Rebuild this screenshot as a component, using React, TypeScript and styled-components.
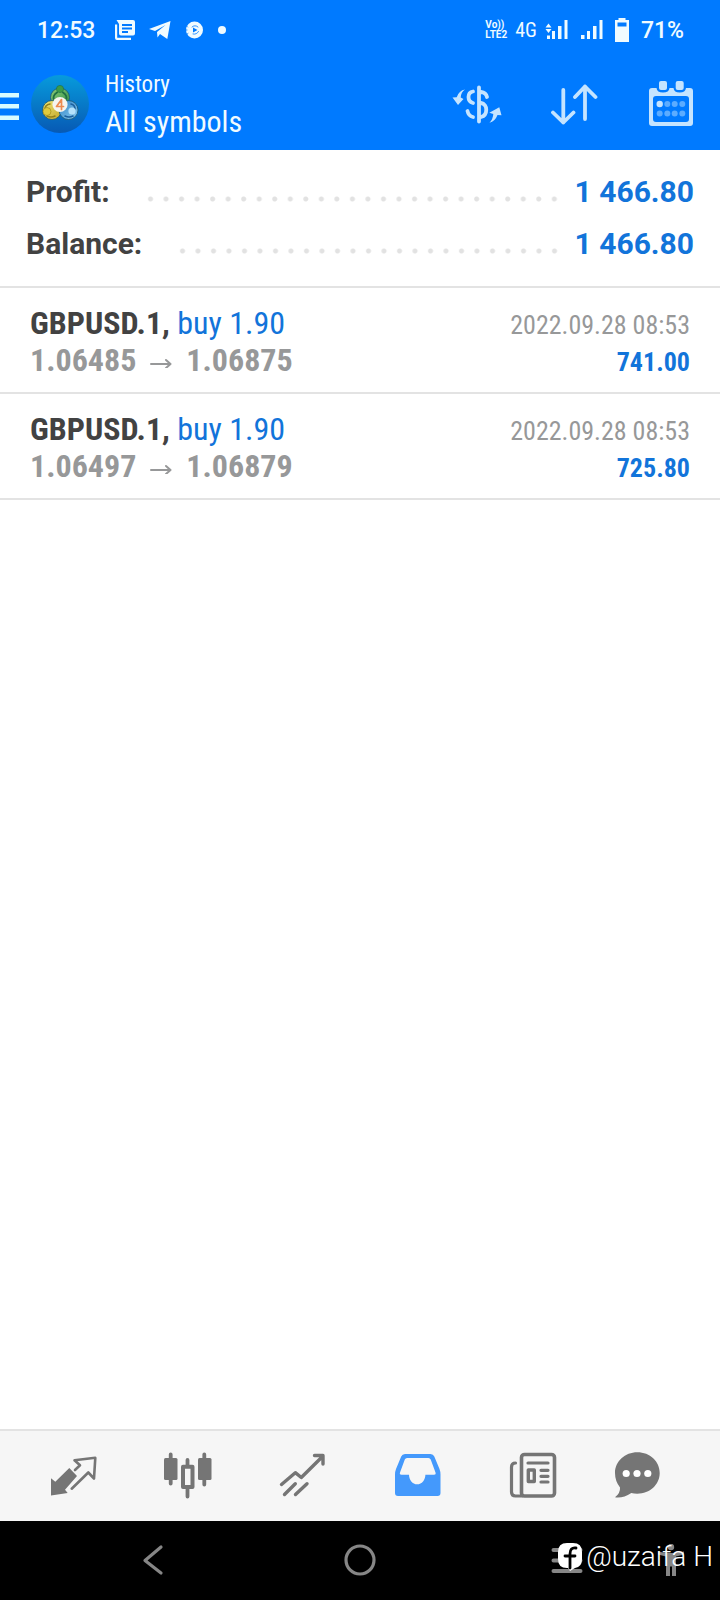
import React from 'react';
import styled, { createGlobalStyle } from 'styled-components';

const GlobalStyle = createGlobalStyle`
  *, *::before, *::after { box-sizing: border-box; }
  body { margin: 0; background: #fff; font-family: Roboto, "Liberation Sans", sans-serif; }
  button { border: 0; padding: 0; background: none; font: inherit; color: inherit; cursor: pointer; }
  dl, dd, ul, h1, p { margin: 0; padding: 0; }
  svg { display: block; flex: none; }
`;

const condensed = '"Roboto Condensed", "Liberation Sans Narrow", Roboto, sans-serif';

const Screen = styled.div`
  display: flex;
  flex-direction: column;
  min-height: 100vh;
`;

const Header = styled.header`
  background: #007aff;
  color: #f0fbff;
`;

const StatusBar = styled.div`
  display: flex;
  align-items: center;
  justify-content: space-between;
  height: 60px;
  padding: 0 36px 0 37px;
  font-size: 23px;
  font-weight: 500;
`;

const StatusGroup = styled.div<{ $gap: number }>`
  display: flex;
  align-items: center;
  gap: ${(p) => p.$gap}px;
`;

const Clock = styled.time`
  margin-right: 6px;
`;

const Network = styled.span`
  font-family: ${condensed};
  font-size: 20px;
  font-weight: 400;
`;

const Volte = styled.span`
  display: flex;
  flex-direction: column;
  font-size: 10px;
  line-height: 10px;
  font-weight: 700;
`;

const AppBar = styled.div`
  display: flex;
  align-items: center;
  height: 90px;
  padding: 0 26px 2px 0;
`;

const IconButton = styled.button`
  display: flex;
  align-items: center;
  justify-content: center;
`;

const LogoMark = styled.svg`
  margin-left: 10px;
`;

const Titles = styled.div`
  margin-left: 15px;
  padding-top: 4px;
  flex: 1;
  font-family: ${condensed};
`;

const Overline = styled.p`
  font-size: 23px;
  line-height: 32px;
`;

const Title = styled.h1`
  font-size: 30px;
  line-height: 42px;
  font-weight: 400;
`;

const Actions = styled.div`
  display: flex;
  gap: 49px;
`;

const Summary = styled.dl`
  padding: 15px 26px 17px;
  border-bottom: 2px solid #e3e3e3;
`;

const SummaryRow = styled.div`
  display: flex;
  align-items: center;
  height: 52px;
  font-size: 30px;
  font-weight: 700;
  color: #424242;
`;

const Leader = styled.span`
  flex: 1;
  height: 6px;
  margin: 16px 13px 0 33px;
  background: radial-gradient(circle, #e2e2e2 2px, transparent 3px) center / 15px 6px space;
`;

const Amount = styled.dd`
  color: #1274da;
`;

const Deals = styled.ul`
  flex: 1;
  list-style: none;
  font-family: ${condensed};
`;

const Deal = styled.li`
  display: flex;
  justify-content: space-between;
  height: 106px;
  padding: 17px 30px 0;
  border-bottom: 2px solid #e3e3e3;
  white-space: nowrap;
`;

const DealSide = styled.div<{ $end?: boolean }>`
  text-align: ${(p) => (p.$end ? 'right' : 'left')};
  font-size: ${(p) => (p.$end ? 26 : 32)}px;
  line-height: 37px;
  padding-top: ${(p) => (p.$end ? 2 : 0)}px;
`;

const Symbol = styled.p`
  font-weight: 700;
  color: #424242;
`;

const Side = styled.span`
  font-weight: 400;
  color: #1274da;
`;

const Prices = styled.p`
  display: flex;
  align-items: center;
  gap: 14px;
  font-weight: 700;
  color: #979899;
`;

const Time = styled.p`
  color: #979899;
`;

const Profit = styled.p`
  font-weight: 700;
  color: #1274da;
`;

const TabBar = styled.nav`
  display: grid;
  grid-template-columns: repeat(5, 115fr) 92fr;
  height: 92px;
  padding: 0 37px 2px 15px;
  border-top: 2px solid #e3e3e3;
  background: #f6f6f6;
`;

const Tab = styled(IconButton)<{ $active?: boolean }>`
  color: ${(p) => (p.$active ? '#4499fc' : '#757575')};
`;

const SystemBar = styled.nav`
  position: relative;
  display: grid;
  grid-template-columns: 207fr 207fr 104fr 65fr;
  align-items: center;
  justify-items: start;
  height: 79px;
  padding: 0 0 2px 137px;
  background: #000;
  color: #868686;
`;

const Handle = styled.div`
  position: absolute;
  top: 20px;
  right: 7px;
  display: flex;
  align-items: center;
  gap: 4px;
  color: #fff;
  font-size: 28px;
  line-height: 32px;
  font-weight: 300;
`;

const stroke = {
  fill: 'none',
  stroke: 'currentColor',
  strokeLinecap: 'round' as const,
  strokeLinejoin: 'round' as const,
};

const Signal = ({ data }: { data?: boolean }) => (
  <svg width="23" height="22" viewBox="0 0 23 22" fill="currentColor">
    {data ? <path d="M3.500 4.500 6.500 8.500h-6zM3.500 14 0.500 10h6zM2 16.500h3V20H2z" /> : <path d="M1 16h3.500v4H1z" />}
    <path d="M7 12h3v8H7zM13 7h3.500v13H13zM19.500 1h3v19h-3z" />
  </svg>
);

const Logo = () => (
  <LogoMark width="60" height="60" viewBox="0 0 60 60" role="img" aria-label="MetaTrader 4">
    <defs>
      <linearGradient id="disc" x1="0" y1="0" x2="0" y2="1">
        <stop offset="0" stopColor="#079bdc" />
        <stop offset="1" stopColor="#0759b4" />
      </linearGradient>
      <linearGradient id="green" x1="0" y1="0" x2="1" y2="1">
        <stop offset="0" stopColor="#8fcb78" />
        <stop offset="1" stopColor="#2b8f45" />
      </linearGradient>
      <linearGradient id="gold" x1="0" y1="0" x2="1" y2="1">
        <stop offset="0" stopColor="#f0e878" />
        <stop offset="1" stopColor="#c3a628" />
      </linearGradient>
      <linearGradient id="azure" x1="0" y1="0" x2="1" y2="1">
        <stop offset="0" stopColor="#2a80c4" />
        <stop offset="1" stopColor="#8ccdf2" />
      </linearGradient>
    </defs>
    <circle cx="30" cy="30" r="29" fill="url(#disc)" />
    <g stroke="#1a5670" strokeWidth="0.800">
      <circle cx="30" cy="23.500" r="9.500" fill="url(#green)" />
      <circle cx="22" cy="36" r="9.500" fill="url(#gold)" />
      <circle cx="38.500" cy="36" r="9.500" fill="url(#azure)" />
    </g>
    <path d="M24 27a7 7 0 0 1 3-8.500M36 27a7 7 0 0 0-3-8.500" {...stroke} stroke="#1f6f43" strokeWidth="2" />
    <path d="M20 30q-5 1-5 5M25 42q-4 2-8 0" {...stroke} stroke="#927f1a" strokeWidth="1.600" />
    <path d="M41 30q4 1 4 5M35 42q4 2 8 0" {...stroke} stroke="#1b5f9d" strokeWidth="1.600" />
    <circle cx="30" cy="15" r="3.600" fill="#3c9b48" stroke="#1f6f43" strokeWidth="0.600" />
    <circle cx="17" cy="37.500" r="4" fill="#e0ca3c" stroke="#927f1a" strokeWidth="0.600" />
    <circle cx="42" cy="37" r="3.600" fill="#b5e2fb" />
    <circle cx="30" cy="30.500" r="7.600" fill="#f5f4ef" />
    <path d="M31.500 35.500V25.500l-5 7h7" {...stroke} stroke="#ec8a50" strokeWidth="1.700" />
  </LogoMark>
);

const tabs = [
  {
    label: 'Quotes',
    icon: (
      <>
        <path d="M2 27.300 6.300 30.700 20.300 17 28 25 16 38.700 18.700 42 2 44.500z" fill="currentColor" />
        <path d="M22.700 37.700 39.300 21.500 45 27.500 46.300 6.800 25.500 9.300 31 14.300 26 19" {...stroke} strokeWidth="2.600" />
      </>
    ),
  },
  {
    label: 'Charts',
    icon: (
      <>
        <path d="M6.700 3.500v29M40.300 3.500v30M23.500 9v6M23.500 38v7.500" {...stroke} strokeWidth="3.800" />
        <rect y="7" width="13.500" height="22" rx="1.500" fill="currentColor" />
        <rect x="34" y="7" width="13.500" height="22" rx="1.500" fill="currentColor" />
        <rect x="19" y="15.800" width="9.500" height="20.200" {...stroke} strokeWidth="4" />
      </>
    ),
  },
  {
    label: 'Trade',
    icon: (
      <path
        d="M2.500 33.500 16.300 21.700 22.300 26.500 43.500 5.500M35.500 4.500H44V13M5.500 43.500 16.300 32.700M16.500 43.500 28 32.700"
        {...stroke}
        strokeWidth="3.400"
      />
    ),
  },
  {
    label: 'History',
    active: true,
    icon: (
      <path
        fill="currentColor"
        fillRule="evenodd"
        d="M11 3h25.500q2.800 0 3.800 2.600L45.500 18q1 2.600 1 5.500V42q0 3-3 3H4q-3 0-3-3V23.500q0-3 1-5.500L7.200 5.600Q8.200 3 11 3zM13 7q-1.500 0-2.200 1.500L6 21.500q-.7 2.200 1.500 2.200H15c0 5 3.500 9.600 8.200 9.600s8.200-4.600 8.200-9.600H40q2.200 0 1.500-2.200L36.700 8.500Q36 7 34.500 7z"
      />
    ),
  },
  {
    label: 'News',
    icon: (
      <>
        <rect x="12.500" y="3.500" width="33" height="41.500" rx="3" {...stroke} strokeWidth="3.600" />
        <path d="M6.500 12Q2.500 12 2.500 16V41Q2.500 45 6.500 45H13M19 12H39M32 19.300h7M32 25.300h7M32 31h7" {...stroke} strokeWidth="3.200" />
        <rect x="19.300" y="19" width="6" height="11.500" {...stroke} strokeWidth="3.400" />
      </>
    ),
  },
  {
    label: 'Messages',
    icon: (
      <>
        <path d="M24.300 1.300C37 1.300 46.700 10.500 46.700 22S37 42.700 24.300 42.700q-3.500 0-6-.7Q10 47.500 2 46.300 7.500 42 7 36.500 2 30 2 22C2 10.500 12 1.300 24.300 1.300z" fill="currentColor" />
        <g fill="#fff">
          <circle cx="13.200" cy="22.500" r="3.600" />
          <circle cx="24" cy="22.500" r="3.600" />
          <circle cx="34.800" cy="22.500" r="3.600" />
        </g>
      </>
    ),
  },
];

const summary = [
  { label: 'Profit:', value: '1 466.80' },
  { label: 'Balance:', value: '1 466.80' },
];

const deals = [
  { open: '1.06485', close: '1.06875', profit: '741.00' },
  { open: '1.06497', close: '1.06879', profit: '725.80' },
];

export default function App() {
  return (
    <Screen>
      <GlobalStyle />
      <Header>
        <StatusBar>
          <StatusGroup $gap={14}>
            <Clock>12:53</Clock>
            <svg width="20" height="20" viewBox="0 0 20 20" fill="currentColor">
              <path fillRule="evenodd" d="M1.500 0H18q2 0 2 2v11.500q0 2-2 2H6q-2 0-2-2V4zM7 4v2h10V4zM7 7.500v2h10v-2zM7 11v2h6v-2z" />
              <path d="M0 4.500h2.200V17.800H16V20H2Q0 20 0 18z" />
            </svg>
            <svg width="22" height="20" viewBox="0 0 22 20" fill="currentColor">
              <path d="M21.500 1 18.300 19 11 14 8.500 17.500 8 12 16.500 5 6 11 0 9z" />
            </svg>
            <svg width="18" height="18" viewBox="0 0 18 18">
              <circle cx="9.500" cy="9" r="8.500" fill="currentColor" />
              <path d="M7 6a4 4 0 0 1 6 0M13.500 10.500A5 5 0 0 1 8 13" {...stroke} stroke="#007aff" strokeWidth="0.800" />
              <path d="M8 6.500v5l4.500-2.500z" fill="#007aff" />
              <path d="M1 4.500 2.500 6M0 9h2M1 14l2-1.500" {...stroke} stroke="#007aff" strokeWidth="0.900" />
            </svg>
            <svg width="10" height="10" viewBox="0 0 10 10" fill="currentColor">
              <circle cx="5" cy="5" r="4" />
            </svg>
          </StatusGroup>
          <StatusGroup $gap={12}>
            <StatusGroup $gap={8}>
              <Volte>
                <span>Vo))</span>
                <span>LTE2</span>
              </Volte>
              <Network>4G</Network>
              <Signal data />
            </StatusGroup>
            <Signal />
            <svg width="14" height="24" viewBox="0 0 14 24" fill="currentColor">
              <path fillRule="evenodd" d="M3.500 0h7v2H14v22H0V2h3.500zM2.500 4.500v4h9v-4z" />
            </svg>
            <span>71%</span>
          </StatusGroup>
        </StatusBar>
        <AppBar>
          <IconButton aria-label="Menu">
            <svg width="20" height="60" viewBox="0 0 20 60" fill="#d8fbff">
              <path d="M0 19h19v4.500H0zM0 30h19v4.500H0zM0 41.500h19V46H0z" />
            </svg>
          </IconButton>
          <Logo />
          <Titles>
            <Overline>History</Overline>
            <Title>All symbols</Title>
          </Titles>
          <Actions>
            <IconButton aria-label="Filter by symbol">
              <svg width="50" height="48" viewBox="0 0 50 48" color="#c5e4ff">
                <path d="M27 7.500v34M21 11.500c-6 1-6 10 0 11.500M15.500 31q1 5 5.500 6M29 12q5 .5 6 5M29 23c7 1 7 12 0 14" {...stroke} strokeWidth="3.800" />
                <path d="M13 9.500Q9 12 8.700 17.500L11.500 19 6 25 .5 17.500 4.700 17.200Q7 10.500 13 9.500zM37.500 42.700Q43 41.500 45.500 35l4 .2-2.200-8-10 5.500 4 1.200Q41 39 37.500 42.700z" fill="currentColor" />
              </svg>
            </IconButton>
            <IconButton aria-label="Sort">
              <svg width="48" height="48" viewBox="0 0 48 48" color="#c5e4ff">
                <path d="M12.300 10V42.500M2 32.500 12.300 42.500 22.500 32.500M34 39V6.500M24 17 34 6.500 44.500 17" {...stroke} strokeWidth="3.800" />
              </svg>
            </IconButton>
            <IconButton aria-label="Period">
              <svg width="46" height="48" viewBox="0 0 46 48" color="#c5e4ff">
                <path
                  fill="currentColor"
                  fillRule="evenodd"
                  d="M4 8H8.500Q9 12.500 15 12.500T21.500 8H25.500Q26 12.500 31.700 12.500T38 8H42Q45 8 45 11V43Q45 46 42 46H4Q1 46 1 43V11Q1 8 4 8zM8 16Q5 16 5 19V39Q5 42 8 42H38Q41 42 41 39V19Q41 16 38 16z"
                />
                <rect x="11" y="1" width="8" height="9" rx="2" fill="currentColor" />
                <rect x="27.700" y="1" width="8" height="9" rx="2" fill="currentColor" />
                <circle cx="11.700" cy="24" r="3.200" fill="currentColor" />
                <g fill="#5cacff">
                  {[19.3, 26.7, 34.3].map((x) => <circle key={x} cx={x} cy="24" r="3" />)}
                  {[11.7, 19.3, 26.7, 34.3].map((x) => <circle key={x} cx={x} cy="33.600" r="3" />)}
                </g>
              </svg>
            </IconButton>
          </Actions>
        </AppBar>
      </Header>

      <Summary>
        {summary.map((row) => (
          <SummaryRow key={row.label}>
            <dt>{row.label}</dt>
            <Leader />
            <Amount>{row.value}</Amount>
          </SummaryRow>
        ))}
      </Summary>

      <Deals>
        {deals.map((deal) => (
          <Deal key={deal.open}>
            <DealSide>
              <Symbol>
                GBPUSD.1, <Side>buy 1.90</Side>
              </Symbol>
              <Prices>
                {deal.open}
                <svg width="22" height="14" viewBox="0 0 22 14" aria-label="to">
                  <path d="M1 10h19M16 6 20.500 10 16 14" {...stroke} strokeWidth="2" />
                </svg>
                {deal.close}
              </Prices>
            </DealSide>
            <DealSide $end>
              <Time>2022.09.28 08:53</Time>
              <Profit>{deal.profit}</Profit>
            </DealSide>
          </Deal>
        ))}
      </Deals>

      <TabBar>
        {tabs.map((tab) => (
          <Tab key={tab.label} aria-label={tab.label} $active={tab.active}>
            <svg width="48" height="48" viewBox="0 0 48 48">{tab.icon}</svg>
          </Tab>
        ))}
      </TabBar>

      <SystemBar>
        <IconButton aria-label="Back">
          <svg width="32" height="32" viewBox="0 0 32 32">
            <path d="M24 3 8 16.500 24 29" {...stroke} strokeWidth="3.200" />
          </svg>
        </IconButton>
        <IconButton aria-label="Home">
          <svg width="32" height="32" viewBox="0 0 32 32">
            <circle cx="16" cy="16" r="14" {...stroke} strokeWidth="3.200" />
          </svg>
        </IconButton>
        <IconButton aria-label="Recent apps">
          <svg width="32" height="32" viewBox="0 0 32 32">
            <path d="M2.500 6h27M2.500 16.500h27M2.500 27h27" {...stroke} strokeWidth="4" />
          </svg>
        </IconButton>
        <IconButton aria-label="Accessibility">
          <svg width="32" height="32" viewBox="0 0 32 32" fill="currentColor">
            <circle cx="16" cy="3" r="3.200" />
            <path d="M3 7.500 11 9h10l8-1.500v3L21 12.500V32h-4V22.500h-2V32h-4V12.500L3 10.500z" />
          </svg>
        </IconButton>
        <Handle>
          <svg width="24" height="30" viewBox="0 0 24 30">
            <path d="M9 1h6q9 0 9 9v7q0 8-7 9l-5 3-2-3H9q-9 0-9-9v-7Q0 1 9 1z" fill="#fff" />
            <path d="M18 6q-6-1-6 6v14M7 14h10" {...stroke} stroke="#000" strokeWidth="2.800" />
          </svg>
          <span>@uzaifa H</span>
        </Handle>
      </SystemBar>
    </Screen>
  );
}
